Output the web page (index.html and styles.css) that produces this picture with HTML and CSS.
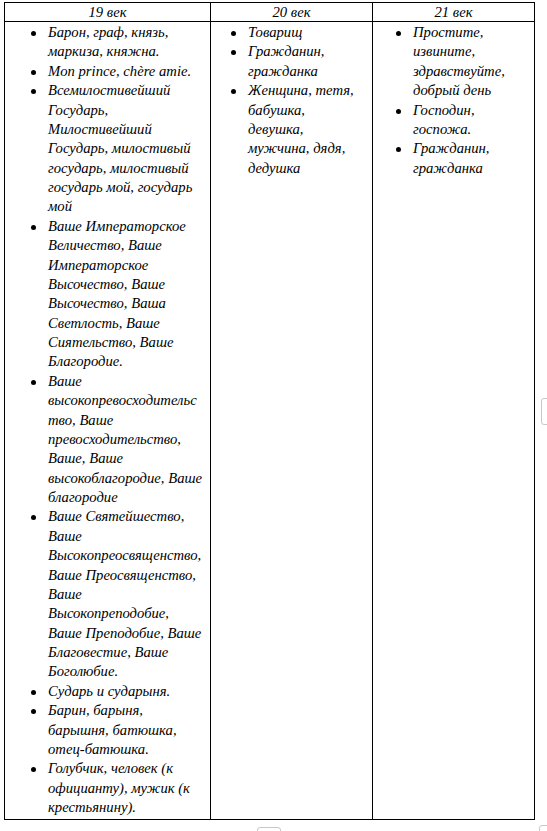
FILE: index.html
```html
<!DOCTYPE html>
<html lang="ru">
<head>
<meta charset="utf-8">
<title>Обращения</title>
<link rel="stylesheet" href="styles.css">
</head>
<body>
<table class="grid">
  <colgroup><col class="w1"><col class="w2"><col class="w3"></colgroup>
  <thead>
    <tr><th>19 век</th><th>20 век</th><th>21 век</th></tr>
  </thead>
  <tbody>
    <tr>
      <td class="c1">
        <ul class="list">
          <li>Барон, граф, князь,<br>маркиза, княжна.</li>
          <li>Mon prince, chère amie.</li>
          <li>Всемилостивейший<br>Государь,<br>Милостивейший<br>Государь, милостивый<br>государь, милостивый<br>государь мой, государь<br>мой</li>
          <li>Ваше Императорское<br>Величество, Ваше<br>Императорское<br>Высочество, Ваше<br>Высочество, Ваша<br>Светлость, Ваше<br>Сиятельство, Ваше<br>Благородие.</li>
          <li>Ваше<br>высокопревосходительс<br>тво, Ваше<br>превосходительство,<br>Ваше, Ваше<br>высокоблагородие, Ваше<br>благородие</li>
          <li>Ваше Святейшество,<br>Ваше<br>Высокопреосвященство,<br>Ваше Преосвященство,<br>Ваше<br>Высокопреподобие,<br>Ваше Преподобие, Ваше<br>Благовестие, Ваше<br>Боголюбие.</li>
          <li>Сударь и сударыня.</li>
          <li>Барин, барыня,<br>барышня, батюшка,<br>отец-батюшка.</li>
          <li>Голубчик, человек (к<br>официанту), мужик (к<br>крестьянину).</li>
        </ul>
      </td>
      <td class="c2">
        <ul class="list">
          <li>Товарищ</li>
          <li>Гражданин,<br>гражданка</li>
          <li>Женщина, тетя,<br>бабушка,<br>девушка,<br>мужчина, дядя,<br>дедушка</li>
        </ul>
      </td>
      <td class="c3">
        <ul class="list">
          <li>Простите,<br>извините,<br>здравствуйте,<br>добрый день</li>
          <li>Господин,<br>госпожа.</li>
          <li>Гражданин,<br>гражданка</li>
        </ul>
      </td>
    </tr>
  </tbody>
</table>
<div class="handle handle-side"></div>
<div class="handle handle-bottom"></div>
<div class="handle handle-corner"></div>
</body>
</html>
```
FILE: styles.css
```css
html, body {
  margin: 0;
  padding: 0;
  background: #fff;
}
body {
  font-family: "Liberation Serif", "DejaVu Serif", serif;
  font-style: italic;
  font-size: 14.67px;
  color: #000;
  position: relative;
  width: 547px;
  height: 831px;
  overflow: hidden;
}
.grid {
  border-collapse: collapse;
  table-layout: fixed;
  width: 530px;
  margin: 2px 0 0 4px;
}
.w1 { width: 206px; }
.w2 { width: 162px; }
.w3 { width: 162px; }
th {
  font-weight: normal;
  font-style: italic;
  height: 18px;
  line-height: 18px;
  padding: 0;
  border: 1px solid #000;
  text-align: center;
}
td {
  vertical-align: top;
  padding: 1px 0 2px 0;
  border: 1px solid #000;
}
.list {
  margin: 0;
  padding: 0;
  list-style: none;
  line-height: 19.375px;
  white-space: nowrap;
}
.c1 .list { padding-left: 43px; }
.c2 .list { padding-left: 37px; }
.c3 .list { padding-left: 40px; }
.list li {
  position: relative;
}
.list li::before {
  content: "";
  position: absolute;
  left: -17px;
  top: 8px;
  width: 5px;
  height: 5px;
  border-radius: 50%;
  background: #000;
}
.handle {
  position: absolute;
  border: 1px solid #c8c8c8;
  border-radius: 3px;
  background: #fff;
}
.handle-side {
  left: 541px;
  top: 398px;
  width: 12px;
  height: 25px;
}
.handle-bottom {
  left: 257px;
  top: 827px;
  width: 22px;
  height: 12px;
}
.handle-corner {
  left: 539px;
  top: 825px;
  width: 14px;
  height: 14px;
}
```
